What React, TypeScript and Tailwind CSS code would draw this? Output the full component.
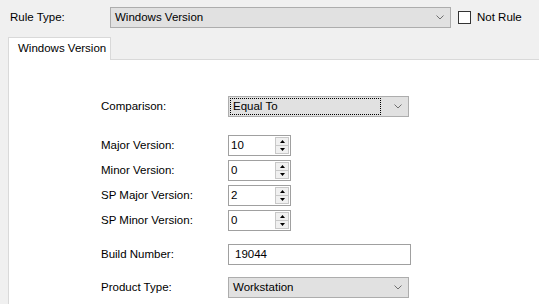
import React from "react";

const font = { fontFamily: '"Liberation Sans", Arial, sans-serif' };

function Chevron() {
  return (
    <svg width="8" height="5" viewBox="0 0 8 5" className="shrink-0">
      <path d="M0.5 0.5 L4 4 L7.5 0.5" fill="none" stroke="#707070" strokeWidth="1" />
    </svg>
  );
}

function Select({ value, width, focus }: { value: string; width: string; focus?: boolean }) {
  return (
    <div className={`${width} h-[21px] border border-[#adadad] bg-[#e1e1e1] flex items-center pr-[6px]`}>
      <div className="flex-1 h-full p-[1px]">
        <div
          className={`h-full flex items-center pl-[2px] ${
            focus ? "border border-dotted border-black mr-[12px]" : "border border-transparent"
          }`}
        >
          {value}
        </div>
      </div>
      <Chevron />
    </div>
  );
}

function Arrow({ up }: { up?: boolean }) {
  return (
    <svg width="5" height="3" viewBox="0 0 5 3">
      <path d={up ? "M0 3 L2.5 0 L5 3 Z" : "M0 0 L2.5 3 L5 0 Z"} fill="#000" />
    </svg>
  );
}

function Spin({ value }: { value: string }) {
  return (
    <div className="w-[63px] h-[21px] border border-[#a0a0a0] bg-white flex items-stretch">
      <div className="flex-1 flex items-center pl-[2px]">{value}</div>
      <div className="w-[14px] flex flex-col my-[1px] mr-[1px] border border-[#c8c8c8]">
        <div className="flex-1 flex items-center justify-center bg-[#f0f0f0] border-b border-[#c8c8c8]">
          <Arrow up />
        </div>
        <div className="flex-1 flex items-center justify-center bg-[#f0f0f0]">
          <Arrow />
        </div>
      </div>
    </div>
  );
}

function Row({ label, children, className }: { label: string; children: React.ReactNode; className?: string }) {
  return (
    <div className={`flex items-center ${className ?? ""}`}>
      <div className="w-[127px]">{label}</div>
      {children}
    </div>
  );
}

export default function App() {
  const spins = [
    { label: "Major Version:", value: "10" },
    { label: "Minor Version:", value: "0" },
    { label: "SP Major Version:", value: "2" },
    { label: "SP Minor Version:", value: "0" },
  ];

  return (
    <div
      className="w-[539px] h-[304px] bg-[#f0f0f0] overflow-hidden flex flex-col text-[11.5px] text-black"
      style={font}
    >
      <div className="flex items-center pt-[7px]">
        <div className="w-[110px] pl-[10px]">Rule Type:</div>
        <Select value="Windows Version" width="w-[341px]" />
        <div className="ml-[7px] w-[13px] h-[13px] border border-[#333] bg-white" />
        <div className="ml-[6px]">Not Rule</div>
      </div>

      <div className="flex mt-[9px]">
        <div className="ml-[8px] w-[103px] h-[23px] border border-b-0 border-[#d9d9d9] bg-white flex items-center pl-[9px]">
          Windows Version
        </div>
        <div className="flex-1 border-b border-[#d9d9d9]" />
      </div>

      <div className="ml-[8px] flex-1 bg-white border-l border-[#d9d9d9] pl-[92px] pt-[36px]">
        <Row label="Comparison:">
          <Select value="Equal To" width="w-[181px]" focus />
        </Row>
        <div className="flex flex-col gap-[4px] mt-[18px]">
          {spins.map((s) => (
            <Row key={s.label} label={s.label}>
              <Spin value={s.value} />
            </Row>
          ))}
        </div>
        <Row label="Build Number:" className="mt-[13px]">
          <div className="w-[183px] h-[21px] border border-[#a0a0a0] bg-white flex items-center pl-[6px]">
            19044
          </div>
        </Row>
        <Row label="Product Type:" className="mt-[12px]">
          <Select value="Workstation" width="w-[181px]" />
        </Row>
      </div>
    </div>
  );
}
